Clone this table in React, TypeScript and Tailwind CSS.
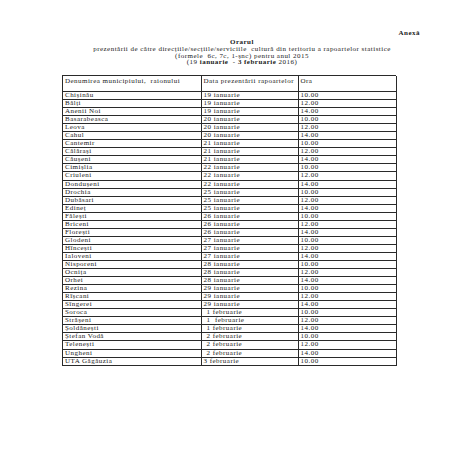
const rows: [string, string, string, number][] = [
  ["Chișinău", "19 ianuarie", "10.00", 0],
  ["Bălți", "19 ianuarie", "12.00", 0],
  ["Anenii Noi", "19 ianuarie", "14.00", 0],
  ["Basarabeasca", "20 ianuarie", "10.00", 0],
  ["Leova", "20 ianuarie", "12.00", 0],
  ["Cahul", "20 ianuarie", "14.00", 0],
  ["Cantemir", "21 ianuarie", "10.00", 0],
  ["Călărași", "21 ianuarie", "12.00", 0],
  ["Căușeni", "21 ianuarie", "14.00", 0],
  ["Cimișlia", "22 ianuarie", "10.00", 0],
  ["Criuleni", "22 ianuarie", "12.00", 0],
  ["Dondușeni", "22 ianuarie", "14.00", 0],
  ["Drochia", "25 ianuarie", "10.00", 0],
  ["Dubăsari", "25 ianuarie", "12.00", 0],
  ["Edineț", "25 ianuarie", "14.00", 0],
  ["Fălești", "26 ianuarie", "10.00", 0],
  ["Briceni", "26 ianuarie", "12.00", 0],
  ["Florești", "26 ianuarie", "14.00", 0],
  ["Glodeni", "27 ianuarie", "10.00", 0],
  ["Hîncești", "27 ianuarie", "12.00", 0],
  ["Ialoveni", "27 ianuarie", "14.00", 0],
  ["Nisporeni", "28 ianuarie", "10.00", 0],
  ["Ocnița", "28 ianuarie", "12.00", 0],
  ["Orhei", "28 ianuarie", "14.00", 0],
  ["Rezina", "29 ianuarie", "10.00", 0],
  ["Rîșcani", "29 ianuarie", "12.00", 0],
  ["Sîngerei", "29 ianuarie", "14.00", 0],
  ["Soroca", "1 februarie", "10.00", 1],
  ["Strășeni", "1  februarie", "12.00", 1],
  ["Șoldănești", "1 februarie", "14.00", 1],
  ["Ștefan Vodă", "2 februarie", "10.00", 1],
  ["Telenești", "2 februarie", "12.00", 1],
  ["Ungheni", "2 februarie", "14.00", 1],
  ["UTA Găgăuzia", "3 februarie", "10.00", 0],
];

export default function App() {
  return (
    <div className="w-[453px] h-[453px] bg-white text-[#1a1a1a] font-['Liberation_Serif',serif] text-[7px] tracking-[0.47px] leading-[6.7px] overflow-hidden">
      <div className="pt-[30px] pr-[33px] text-right font-bold">Anexă</div>
      <div className="mt-[2.5px] flex flex-col items-center pl-[31px] whitespace-pre">
        <div className="font-bold">Orarul</div>
        <div>prezentării de către direcțiile/secțiile/serviciile  cultură din teritoriu a rapoartelor statistice</div>
        <div>(formele  6c, 7c, 1-șnc) pentru anul 2015</div>
        <div>
          (19 <b>ianuarie </b> - <b>3 februarie</b> 2016)
        </div>
      </div>

      <div className="ml-[62px] mt-[9px] w-[334px] border-l border-t border-[#2a2a2a] whitespace-pre">
        <div className="grid grid-cols-[138.5px_97px_98.5px] leading-[8px]">
          <div className="h-[16px] border-r border-b border-[#2a2a2a] pl-[2px] pt-[1px]">Denumirea municipiului,  raionului</div>
          <div className="h-[16px] border-r border-b border-[#2a2a2a] pl-[2px] pt-[1px]">Data prezentării rapoartelor</div>
          <div className="h-[16px] border-r border-b border-[#2a2a2a] pl-[2px] pt-[1px]">Ora</div>
        </div>
        {rows.map(([name, date, ora, indent]) => (
          <div key={name} className="grid grid-cols-[138.5px_97px_98.5px] leading-[7.5px]">
            <div className="h-[8.06px] border-r border-b border-[#2a2a2a] pl-[2px]">{name}</div>
            <div className={indent ? "h-[8.06px] border-r border-b border-[#2a2a2a] pl-[5px]" : "h-[8.06px] border-r border-b border-[#2a2a2a] pl-[2px]"}>{date}</div>
            <div className="h-[8.06px] border-r border-b border-[#2a2a2a] pl-[2px]">{ora}</div>
          </div>
        ))}
      </div>
    </div>
  );
}
